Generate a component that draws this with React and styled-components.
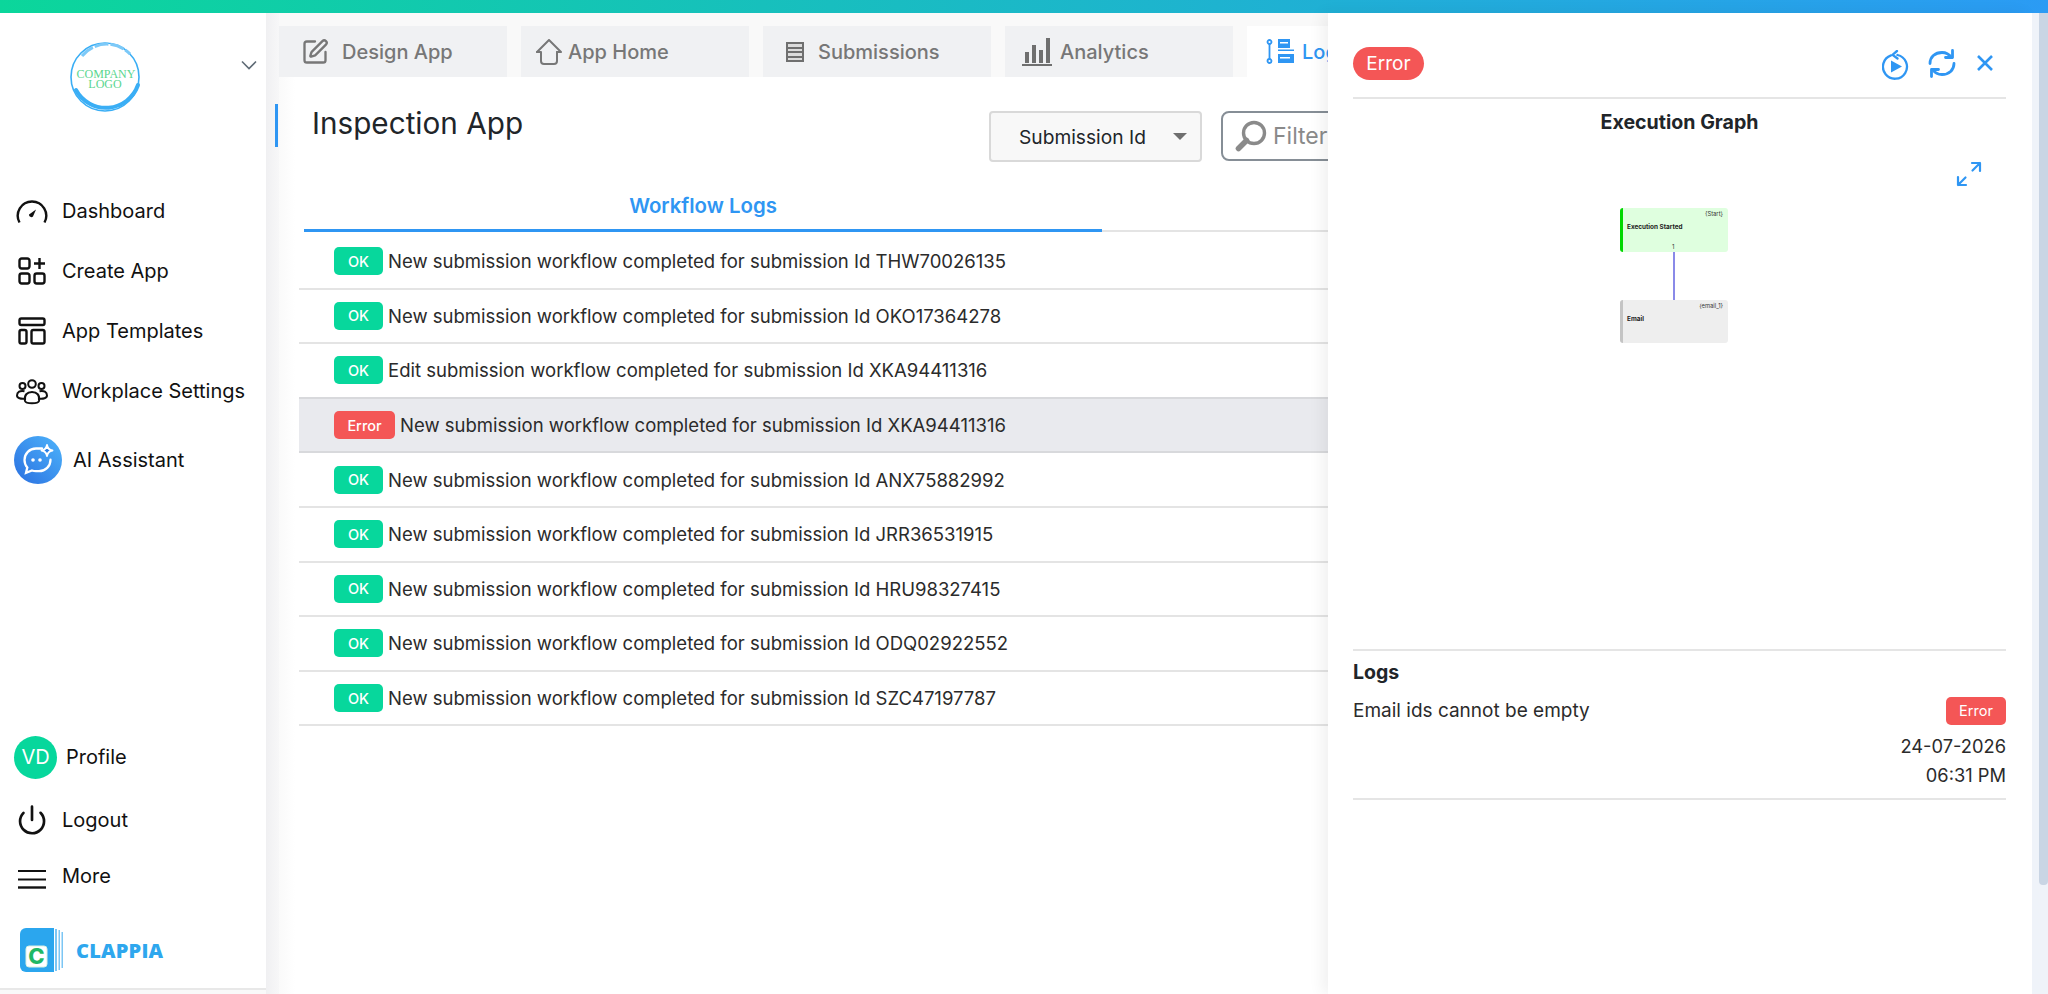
import React from "react";
import styled, { createGlobalStyle } from "styled-components";
import { SquarePen, Power } from "lucide-react";

const Global = createGlobalStyle`
  html, body { margin: 0; height: 100%; overflow: hidden; background: #fff; }
  body { font-family: Inter, "Liberation Sans", sans-serif; color: #212529; }
  * { box-sizing: border-box; }
`;

const Page = styled.div`height: 994px; display: flex; flex-direction: column; overflow: hidden;`;
const TopBar = styled.div`height: 13px; flex: none; background: linear-gradient(90deg, #0bd69b 0%, #2b9bf4 100%);`;
const Body = styled.div`flex: 1; display: flex; position: relative; min-height: 0; background: #f9f9f9;`;

const Sidebar = styled.aside`width: 266px; flex: none; background: #fff; display: flex; flex-direction: column; border-bottom: 2px solid #e8e8e8; height: 977px;`;
const LogoRow = styled.div`height: 168px; flex: none; display: flex; position: relative; padding: 27px 0 0 68px;`;
const Chevron = styled.svg`position: absolute; left: 241px; top: 47px; width: 16px; height: 10px;`;
const NavList = styled.nav`display: flex; flex-direction: column;`;
const NavItem = styled.div`height: 60px; display: flex; align-items: center; gap: 14px; padding-left: 16px; font-size: 20px; color: #111;`;
const IconSlot = styled.span`width: 32px; height: 32px; display: flex; align-items: center; justify-content: center; flex: none; padding-top: ${p => p.$pt || 0}px;`;
const AiItem = styled.div`display: flex; align-items: center; gap: 11px; padding-left: 14px; height: 48px; margin-top: 15px; font-size: 20px; color: #111;`;
const Spacer = styled.div`flex: 1;`;
const Bottom = styled.div`display: flex; flex-direction: column; padding-bottom: 16px;`;
const ProfileItem = styled.div`display: flex; align-items: center; gap: 9px; padding-left: 14px; font-size: 20px; color: #111; height: 44px; margin-bottom: 19px;`;
const Avatar = styled.div`width: 43px; height: 43px; border-radius: 50%; background: #07d79c; color: #fff; display: flex; align-items: center; justify-content: center; font-size: 20px;`;
const BottomItem = styled(NavItem)`height: ${p => p.$h}px; align-items: center;`;
const BrandRow = styled.div`display: flex; align-items: center; gap: 13px; padding-left: 20px; margin-top: 18px;`;
const BrandName = styled.div`font-family: "Open Sans", Inter, sans-serif; font-weight: 800; font-size: 20px; color: #2ea7ee; letter-spacing: 0.2px;`;

const Gutter = styled.div`width: 13px; flex: none; background: linear-gradient(90deg, #f0f0f2, #f7f7f8); padding: 91px 0 0 9px;`;
const Marker = styled.div`width: 3px; height: 43px; background: #2f96f3;`;

const Main = styled.main`flex: 1; min-width: 0; display: flex; flex-direction: column;`;
const TabStrip = styled.div`height: 64px; flex: none; display: flex; gap: 14px; padding-top: 13px; overflow: hidden;`;
const Tab = styled.div`
  width: 228px; flex: none; height: 51px; display: flex; align-items: center; padding-left: ${p => p.$pad}px; gap: ${p => p.$gap}px;
  background: ${p => p.$active ? "#fff" : "#f0f1f3"}; color: ${p => p.$active ? "#2f96f3" : "#777"};
  font-size: 20px; font-weight: 500;
`;
const Content = styled.div`flex: 1; background: linear-gradient(90deg, #fafafa, #fff 16px); min-width: 0; overflow: hidden;`;
const Head = styled.div`display: grid; grid-template-columns: 658px 213px 320px; column-gap: 19px; padding: 34px 0 0 33px; height: 85px;`;
const Title = styled.h1`margin: 0; font-size: 29.7px; font-weight: 400; line-height: 36px; color: #212529; position: relative; top: -6px;`;
const SelectBox = styled.div`height: 51px; background: #f8f8f8; border: 2px solid #d9d9d9; border-radius: 4px; display: flex; align-items: center; padding-left: 28px; gap: 27px; font-size: 19.2px; color: #212529;`;
const Caret = styled.div`width: 0; height: 0; border-left: 7px solid transparent; border-right: 7px solid transparent; border-top: 7px solid #6f6f6f;`;
const FilterBox = styled.div`height: 50px; border: 2px solid #868e96; border-radius: 8px; display: flex; align-items: center; gap: 6px; padding-left: 12px; font-size: 23px; color: #8a8a8a; background: #fff;`;
const SubTabs = styled.div`display: flex; margin-left: 25px; height: 70px; border-bottom: 2px solid #e4e4e4;`;
const SubTab = styled.div`width: 798px; height: 70px; border-bottom: 3px solid #2f96f3; color: #2f96f3; font-size: 20.4px; font-weight: 600; display: flex; justify-content: center; align-items: flex-end; padding-bottom: 11px;`;
const Rows = styled.div`margin: 3px 0 0 20px;`;
const Row = styled.div`
  height: 54.6px; display: flex; align-items: center; gap: 5px; padding-left: 35px; font-size: 18.52px; color: #2b2b2b;
  border-bottom: 2px solid ${p => p.$selected ? "#d8d9dc" : "#e4e4e4"};
  background: ${p => p.$selected ? "#e9eaee" : "transparent"};
  ${p => p.$selected ? "box-shadow: 0 -2px 0 #d8d9dc;" : ""}
`;
const Badge = styled.span`
  height: 28px; width: ${p => p.$w}px; flex: none; border-radius: 5px; color: #fff; font-size: 14.5px; font-weight: 500;
  display: flex; align-items: center; justify-content: center; background: ${p => p.$error ? "#f45656" : "#07d79c"};
`;

const Panel = styled.div`position: absolute; top: 0; right: 0; bottom: 0; width: 720px; display: flex; background: #fff;`;
const PanelBody = styled.section`width: 704px; padding: 0 26px 0 25px; background: #fff; box-shadow: -6px 0 14px rgba(0,0,0,0.06);`;
const PanelHead = styled.header`height: 86px; padding-top: 34px; display: flex; justify-content: space-between; border-bottom: 2px solid #e5e5e5;`;
const Pill = styled.div`width: 71px; height: 33px; border-radius: 17px; background: #f45656; color: #fff; font-size: 19px; display: flex; align-items: center; justify-content: center;`;
const PanelActions = styled.div`display: flex; align-items: flex-start; color: #2f96f3; padding-right: 13px; margin-top: 2px;`;
const ActionIcon = styled.svg`display: block; flex: none; margin-left: ${p => p.$ml}px; margin-top: ${p => p.$mt || 0}px;`;
const GraphSection = styled.div`height: 550px; display: flex; flex-direction: column; align-items: center;`;
const SectionTitle = styled.h2`margin: 11px 0 0; font-size: 19.6px; font-weight: 700; line-height: 24px; color: #212529;`;
const ExpandRow = styled.div`align-self: stretch; display: flex; justify-content: flex-end; padding: 27px 24px 0 0; height: 74px; color: #2f96f3;`;
const Graph = styled.div`display: flex; flex-direction: column; align-items: center; margin-right: 11px;`;
const Node = styled.div`
  width: 108px; height: ${p => p.$h}px; border-radius: 3px; position: relative; padding: 15px 0 0 4px;
  background: ${p => p.$start ? "#dfffdf" : "#eeeeee"}; border-left: 3px solid ${p => p.$start ? "#00d800" : "#c4c4c4"};
`;
const NodeId = styled.span`position: absolute; top: 2px; right: 5px; font-size: 5.8px; color: #333; line-height: 7px;`;
const NodeName = styled.div`font-size: 6.4px; font-weight: 700; color: #222; line-height: 8px;`;
const NodeCount = styled.span`position: absolute; bottom: 1px; left: 49px; font-size: 6px; color: #333; line-height: 8px;`;
const Edge = styled.div`width: 2px; height: 48px; background: #8a8ae8;`;
const LogsSection = styled.div`border-top: 2px solid #e5e5e5; border-bottom: 2px solid #e5e5e5; padding: 9px 0 8px;`;
const LogsTitle = styled.h3`margin: 0 0 12px; font-size: 19.5px; font-weight: 700; line-height: 24px; color: #212529;`;
const LogLine = styled.div`display: flex; justify-content: space-between; align-items: center; font-size: 19px; color: #2b2b2b; height: 29px; margin-bottom: 7px;`;
const ErrBadge = styled(Badge)`font-size: 14.5px; font-weight: 400;`;
const Stamp = styled.div`text-align: right; font-size: 18.3px; line-height: 29px; color: #2b2b2b;`;
const Track = styled.div`flex: 1; background: #eff3f9; padding-left: 7px;`;
const Thumb = styled.div`height: 872px; width: 9px; background: #c9d5e4; border-radius: 0 0 4px 4px;`;

const CompanyLogo = () => (
  <svg width="74" height="74" viewBox="0 0 74 74">
    <circle cx="37" cy="37" r="34" fill="none" stroke="#3aaef5" strokeWidth="1.6" />
    <path d="M8 50A34 34 0 0 0 70 45" fill="none" stroke="#3aaef5" strokeWidth="4" strokeLinecap="round" />
    <path d="M14 16A32 32 0 0 1 62 14" fill="none" stroke="#7cc9f8" strokeWidth="3" strokeDasharray="14 2" />
    <text x="38" y="38" textAnchor="middle" fontFamily="Liberation Serif, serif" fontSize="12" fill="#5ad68f">COMPANY</text>
    <text x="37" y="47.5" textAnchor="middle" fontFamily="Liberation Serif, serif" fontSize="12" fill="#5ad68f">LOGO</text>
  </svg>
);
const GaugeIcon = () => (
  <svg width="32" height="26" viewBox="0 0 32 26" fill="none" stroke="#111" strokeWidth="2.4">
    <path d="M3.5 24.5A14.2 14.2 0 1 1 28.5 24.5" strokeLinecap="butt" />
    <path d="M13 16.5 20 11.5 17 18.5a2.4 2.4 0 0 1-4-2Z" fill="#111" stroke="none" />
  </svg>
);
const CreateIcon = () => (
  <svg width="28" height="28" viewBox="0 0 28 28" fill="none" stroke="#111" strokeWidth="2.4">
    <rect x="1.5" y="1.5" width="10" height="10" rx="2.2" />
    <rect x="1.5" y="16.5" width="10" height="10" rx="2.2" />
    <rect x="16.5" y="16.5" width="10" height="10" rx="2.2" />
    <path d="M21.5 1v11M16 6.5h11" />
  </svg>
);
const TemplatesIcon = () => (
  <svg width="28" height="28" viewBox="0 0 28 28" fill="none" stroke="#111" strokeWidth="2.4">
    <rect x="1.5" y="1.5" width="25" height="6.5" rx="1.8" />
    <rect x="1.5" y="13" width="7" height="13.5" rx="1.8" />
    <rect x="13.5" y="13" width="13" height="13.5" rx="1.8" />
  </svg>
);
const PeopleIcon = () => (
  <svg width="32" height="27" viewBox="0 0 32 27" fill="none" stroke="#111" strokeWidth="2">
    <circle cx="16" cy="6" r="3.8" />
    <circle cx="6.5" cy="8" r="3" />
    <circle cx="25.5" cy="8" r="3" />
    <path d="M9 23c-1-6 2-9 7-9s8 3 7 9c-1 3-13 3-14 0Z" />
    <path d="M8.5 13.2C4 12.2 1 14 1 17.6c0 2.7 4 3.4 7 3.2M23.5 13.2C28 12.2 31 14 31 17.6c0 2.7-4 3.4-7 3.2" />
  </svg>
);
const AiIcon = () => (
  <svg width="48" height="48" viewBox="0 0 48 48">
    <defs>
      <linearGradient id="aig" x1="0" y1="1" x2="1" y2="0">
        <stop offset="0" stopColor="#2a6fe0" />
        <stop offset="1" stopColor="#4db4fb" />
      </linearGradient>
    </defs>
    <circle cx="24" cy="24" r="24" fill="url(#aig)" />
    <path d="M28 12.5H22C15.5 12.5 10.5 17.5 10.5 24c0 3 1 5.5 2.8 7.5l-1.3 5.3 6-2.3c1.3.5 2.5.7 4 .7h3c6.5 0 11.5-5 11.5-11.5" fill="none" stroke="#fff" strokeWidth="2.3" strokeLinecap="round" />
    <circle cx="19" cy="24" r="1.8" fill="#fff" />
    <circle cx="26" cy="24" r="1.8" fill="#fff" />
    <path d="M33 9c.6 3.5 2 5 5.5 5.5-3.5.6-4.9 2-5.5 5.5-.6-3.5-2-4.9-5.5-5.5 3.5-.5 4.9-2 5.5-5.5Z" fill="#2a80e8" stroke="#fff" strokeWidth="1.8" strokeLinejoin="round" />
  </svg>
);
const MenuIcon = () => (
  <svg width="28" height="19" viewBox="0 0 28 19" stroke="#111" fill="none">
    <path d="M0 1h28M0 9.5h28" strokeWidth="1.8" />
    <path d="M0 17.5h28" strokeWidth="2.4" />
  </svg>
);
const ClappiaLogo = () => (
  <svg width="43" height="44" viewBox="0 0 43 44">
    <path d="M6 0h28v44H6a6 6 0 0 1-6-6V6a6 6 0 0 1 6-6Z" fill="#2ba6ee" />
    <path d="M35 1h2v42h-2zM38.5 2h1.500v40h-1.500zM41.5 4h1.500v36h-1.500z" fill="#7cc6f4" />
    <rect x="6" y="18" width="21" height="21" rx="3" fill="#fff" stroke="#d9f1e3" />
    <text x="16.5" y="36" textAnchor="middle" fontFamily="Inter, sans-serif" fontWeight="800" fontSize="22" fill="#1fb866">C</text>
  </svg>
);
const HomeIcon = () => (
  <svg width="26" height="26" viewBox="0 0 26 26" fill="none" stroke="#777" strokeWidth="2" strokeLinejoin="round" strokeLinecap="round">
    <path d="M1 13 13 1l12 12h-4" />
    <path d="M1 13h4v9a3 3 0 0 0 3 3h10a3 3 0 0 0 3-3v-9" />
  </svg>
);
const ListIcon = () => (
  <svg width="18" height="20" viewBox="0 0 18 20" shapeRendering="crispEdges">
    <rect width="18" height="20" fill="#6f6f6f" />
    <path d="M2 2h14v2.5H2zM2 6.5h14V9H2zM2 11h14v2.5H2zM2 15.5h14V18H2z" fill="#dcdcdc" />
  </svg>
);
const BarsIcon = () => (
  <svg width="30" height="28" viewBox="0 0 30 28" fill="#6f6f6f">
    <rect x="3" y="14" width="4" height="11" />
    <rect x="10" y="7" width="4" height="18" />
    <rect x="17" y="12" width="4" height="13" />
    <rect x="24" y="0" width="4" height="25" />
    <rect x="0" y="26" width="30" height="2" />
  </svg>
);
const LogsIcon = () => (
  <svg width="28" height="26" viewBox="0 0 28 26">
    <g fill="none" stroke="#2f96f3" strokeWidth="1.8">
      <circle cx="3.5" cy="3" r="2" />
      <circle cx="3.5" cy="22" r="2" />
      <path d="M3.5 5v15" />
    </g>
    <path d="M12 0h12v9H12zM12 15h16v9H12z" fill="#2f96f3" />
    <path d="M14 3h8v1.5h-8zM14 18h10v1.5H14z" fill="#fff" />
    <path d="M12 10.5h16v1.5H12z" fill="#2f96f3" />
  </svg>
);
const SearchIcon = () => (
  <svg width="32" height="32" viewBox="0 0 32 32" fill="none" stroke="#8a8a8a">
    <circle cx="19" cy="13" r="10.5" strokeWidth="3.4" />
    <path d="M11.5 20.5 3.5 28.5" strokeWidth="5.5" strokeLinecap="round" />
  </svg>
);
const ReplayIcon = () => (
  <ActionIcon width="27" height="30" viewBox="0 0 27 30" fill="none" stroke="#2f96f3" strokeWidth="2.3" $ml={0} $mt={1}>
    <path d="M15.5 5A12 12 0 1 1 9 5.4" strokeLinecap="round" />
    <path d="M15 1 10.5 4.8l5 3.7" strokeLinecap="round" strokeLinejoin="round" />
    <path d="M9 10.5v12l11-6Z" fill="#2f96f3" stroke="none" />
  </ActionIcon>
);
const SyncIcon = () => (
  <ActionIcon width="28" height="29" viewBox="0 0 28 29" fill="none" stroke="#2f96f3" strokeWidth="2.8" strokeLinecap="round" strokeLinejoin="round" $ml={19}>
    <path d="M2 14.5C2 8 7 3.5 14 3.5c4 0 7 1.5 9.5 5" />
    <path d="M24.5 1.5v7H17.5" />
    <path d="M26 14.5c0 6.5-5 11-12 11-4 0-7-1.5-9.500-5" />
    <path d="M3.5 27.5v-7H10.5" />
  </ActionIcon>
);
const CloseIcon = () => (
  <ActionIcon width="16" height="16" viewBox="0 0 16 16" fill="none" stroke="#2f96f3" strokeWidth="2.6" $ml={21} $mt={6}>
    <path d="M1 1l14 14M15 1 1 15" />
  </ActionIcon>
);
const ExpandIcon = () => (
  <svg width="26" height="26" viewBox="0 0 26 26" fill="none" stroke="#2f96f3" strokeWidth="2.2" strokeLinecap="round" strokeLinejoin="round">
    <path d="M16.5 9.5 24 2M16 2h8v8" />
    <path d="M9.5 16.5 2 24M2 16v8h8" />
  </svg>
);

const logs = [
  ["ok", "New submission workflow completed for submission Id THW70026135"],
  ["ok", "New submission workflow completed for submission Id OKO17364278"],
  ["ok", "Edit submission workflow completed for submission Id XKA94411316"],
  ["error", "New submission workflow completed for submission Id XKA94411316"],
  ["ok", "New submission workflow completed for submission Id ANX75882992"],
  ["ok", "New submission workflow completed for submission Id JRR36531915"],
  ["ok", "New submission workflow completed for submission Id HRU98327415"],
  ["ok", "New submission workflow completed for submission Id ODQ02922552"],
  ["ok", "New submission workflow completed for submission Id SZC47197787"],
];

export default function App() {
  return (
    <Page>
      <Global />
      <TopBar />
      <Body>
        <Sidebar>
          <LogoRow>
            <CompanyLogo />
            <Chevron viewBox="0 0 16 10" fill="none" stroke="#5f6b76" strokeWidth="1.6"><path d="M1 1.5 8 8.5l7-7" /></Chevron>
          </LogoRow>
          <NavList>
            <NavItem><IconSlot><GaugeIcon /></IconSlot>Dashboard</NavItem>
            <NavItem><IconSlot><CreateIcon /></IconSlot>Create App</NavItem>
            <NavItem><IconSlot><TemplatesIcon /></IconSlot>App Templates</NavItem>
            <NavItem><IconSlot><PeopleIcon /></IconSlot>Workplace Settings</NavItem>
          </NavList>
          <AiItem><AiIcon />AI Assistant</AiItem>
          <Spacer />
          <Bottom>
            <ProfileItem><Avatar>VD</Avatar>Profile</ProfileItem>
            <BottomItem $h={44}><IconSlot><Power size={32} color="#111" strokeWidth={2} /></IconSlot>Logout</BottomItem>
            <BottomItem $h={68}><IconSlot $pt={7}><MenuIcon /></IconSlot>More</BottomItem>
            <BrandRow><ClappiaLogo /><BrandName>CLAPPIA</BrandName></BrandRow>
          </Bottom>
        </Sidebar>
        <Gutter><Marker /></Gutter>
        <Main>
          <TabStrip>
            <Tab $pad={22} $gap={13}><SquarePen size={28} color="#777" strokeWidth={2} />Design App</Tab>
            <Tab $pad={15} $gap={6}><HomeIcon />App Home</Tab>
            <Tab $pad={23} $gap={14}><ListIcon />Submissions</Tab>
            <Tab $pad={17} $gap={8}><BarsIcon />Analytics</Tab>
            <Tab $pad={19} $gap={8} $active><LogsIcon />Logs</Tab>
          </TabStrip>
          <Content>
            <Head>
              <Title>Inspection App</Title>
              <SelectBox>Submission Id<Caret /></SelectBox>
              <FilterBox><SearchIcon />Filter</FilterBox>
            </Head>
            <SubTabs><SubTab>Workflow Logs</SubTab></SubTabs>
            <Rows>
              {logs.map(([status, text], i) => (
                <Row key={i} $selected={status === "error"}>
                  <Badge $error={status === "error"} $w={status === "error" ? 61 : 49}>{status === "error" ? "Error" : "OK"}</Badge>
                  {text}
                </Row>
              ))}
            </Rows>
          </Content>
        </Main>
        <Panel>
          <PanelBody>
            <PanelHead>
              <Pill>Error</Pill>
              <PanelActions>
                <ReplayIcon />
                <SyncIcon />
                <CloseIcon />
              </PanelActions>
            </PanelHead>
            <GraphSection>
              <SectionTitle>Execution Graph</SectionTitle>
              <ExpandRow><ExpandIcon /></ExpandRow>
              <Graph>
                <Node $start $h={44}>
                  <NodeId>{"{Start}"}</NodeId>
                  <NodeName>Execution Started</NodeName>
                  <NodeCount>1</NodeCount>
                </Node>
                <Edge />
                <Node $h={43}>
                  <NodeId>{"{email_1}"}</NodeId>
                  <NodeName>Email</NodeName>
                </Node>
              </Graph>
            </GraphSection>
            <LogsSection>
              <LogsTitle>Logs</LogsTitle>
              <LogLine>Email ids cannot be empty<ErrBadge $error $w={60}>Error</ErrBadge></LogLine>
              <Stamp>24-07-2026</Stamp>
              <Stamp>06:31 PM</Stamp>
            </LogsSection>
          </PanelBody>
          <Track><Thumb /></Track>
        </Panel>
      </Body>
    </Page>
  );
}
